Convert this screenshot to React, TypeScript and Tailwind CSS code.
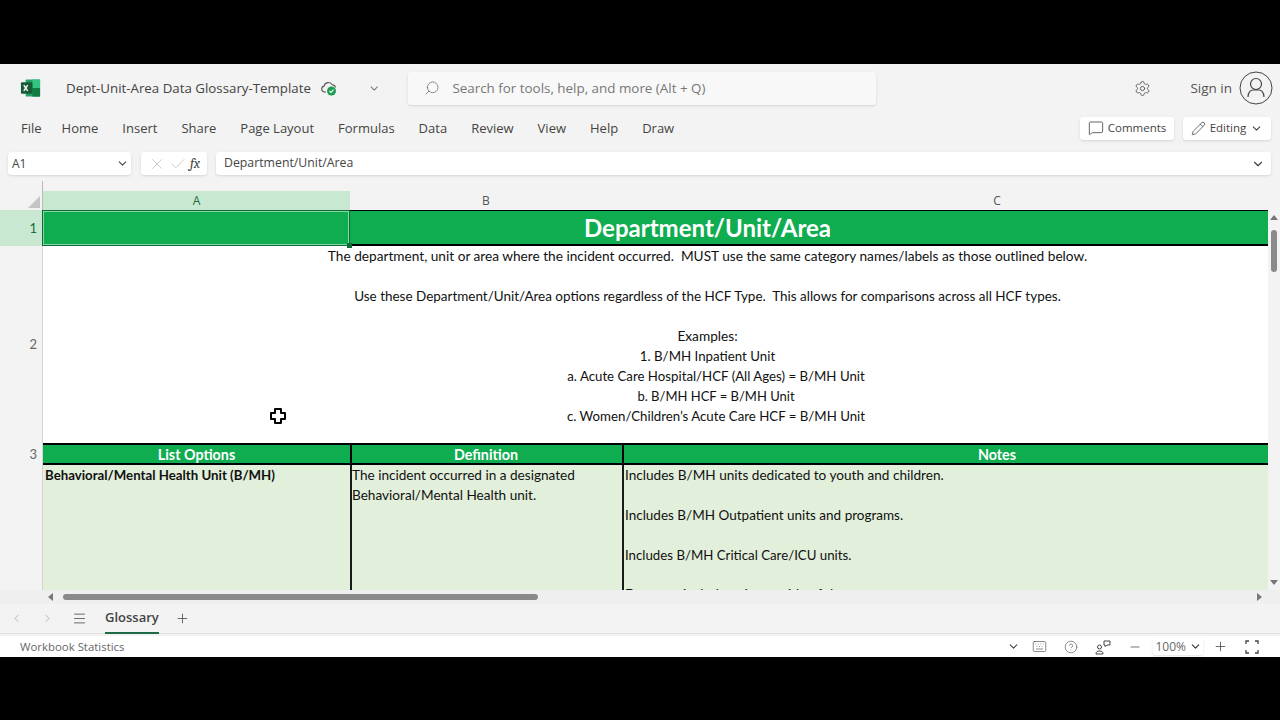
import React from 'react';
import { ChevronDown, ChevronLeft, ChevronRight, CircleHelp, Check, Keyboard, Menu, MessageSquare, Minus, Pencil, Plus, Search, Settings, X } from 'lucide-react';

const ribbonTabs = ['Home', 'Insert', 'Share', 'Page Layout', 'Formulas', 'Data', 'Review', 'View', 'Help', 'Draw'];

const ExcelLogo = () => (
  <svg width="22" height="20" viewBox="0 0 22 20">
    <rect x="6" y="1" width="15" height="18" rx="1" fill="#21a366" />
    <rect x="13" y="1" width="8" height="9" fill="#33c481" />
    <rect x="13" y="10" width="8" height="9" fill="#107c41" />
    <rect x="1" y="4" width="12" height="12" rx="1" fill="#185c37" />
    <path d="M4 7l4 6M8 7l-4 6" stroke="#fff" strokeWidth="1.5" fill="none" />
  </svg>
);

const CloudCheck = () => (
  <svg width="18" height="18" viewBox="0 0 18 18" fill="none">
    <path d="M6 13H4.500a3 3 0 0 1-.5-5.900 4.500 4.500 0 0 1 8.300-1.300 3.500 3.500 0 0 1 3.200 2.700" stroke="#555" strokeWidth="1.100" />
    <circle cx="11.500" cy="12" r="4.500" fill="#1f9d55" />
    <path d="M9.500 12l1.500 1.500 2.500-2.800" stroke="#fff" strokeWidth="1.100" />
  </svg>
);

const Avatar = () => (
  <svg width="34" height="34" viewBox="0 0 34 34" fill="none" stroke="#444" strokeWidth="1.200">
    <circle cx="17" cy="17" r="16" strokeWidth="1" />
    <circle cx="17" cy="13" r="5.500" />
    <path d="M9 26c0-5 3-7 5-7h6c2 0 5 2 5 7" />
  </svg>
);

const CellCursor = () => (
  <svg className="absolute left-[269px] top-[216px] z-10" width="18" height="18" viewBox="0 0 18 18">
    <path d="M6 2h6v4h4v6h-4v4H6v-4H2V6h4z" fill="#fff" stroke="#000" strokeWidth="2" strokeLinejoin="round" />
  </svg>
);

const Corners = () => (
  <svg width="14" height="14" viewBox="0 0 14 14" fill="none" stroke="#444" strokeWidth="1.300">
    <path d="M1 4V1h3M10 1h3v3M13 10v3h-3M4 13H1v-3" />
  </svg>
);

const Feedback = () => (
  <svg width="16" height="16" viewBox="0 0 16 16" fill="none" stroke="#444" strokeWidth="1">
    <circle cx="4.500" cy="8" r="2" />
    <path d="M1 15c0-2 1-3 3.500-3S8 13 8 15zM9 2h6v4h-3l-2 1.500V6H9z" />
  </svg>
);

const RowHead = ({ n, className, active }: { n: string; className: string; active?: boolean }) => (
  <div className={`flex items-center justify-end border-r border-[#d4d4d4] pr-[5px] text-[13px] ${active ? 'bg-[#c9e8d2] text-[#1c6b3c]' : 'text-[#666]'} ${className}`}>{n}</div>
);

export default function App() {
  return (
    <div className="h-[720px] w-[1280px] overflow-hidden bg-black" style={{ fontFamily: '"Open Sans", sans-serif' }}>
      <div className="mt-[64px] flex h-[593px] flex-col bg-[#f3f3f3] text-[#444]">
        {/* title bar */}
        <div className="flex h-[48px] items-center pl-[20px] pr-[7px]">
          <ExcelLogo />
          <span className="ml-[25px] pt-[1px] text-[13.3px] whitespace-nowrap">Dept-Unit-Area Data Glossary-Template</span>
          <span className="ml-[9px]"><CloudCheck /></span>
          <ChevronDown size={13} className="ml-[30px] text-[#777]" />
          <div className="ml-[28px] flex h-[33px] w-[468px] shrink-0 items-center rounded-[3px] bg-[#f8f8f8] pl-[16px] shadow-sm">
            <Search size={16} className="-scale-x-100 text-[#777]" strokeWidth={1.250} />
            <span className="ml-[12px] text-[13.4px] text-[#777]">Search for tools, help, and more (Alt + Q)</span>
          </div>
          <Settings size={17} strokeWidth={1.250} className="ml-[258px] shrink-0 text-[#555]" />
          <span className="ml-[39px] text-[13.5px] whitespace-nowrap text-[#555]">Sign in</span>
          <span className="ml-[7px]"><Avatar /></span>
        </div>

        {/* ribbon tabs */}
        <div className="flex h-[32px] items-center pl-[21px] pr-[9px]">
          <span className="mr-[20px] pt-[1px] text-[13px]">File</span>
          <nav className="flex gap-[24px] pt-[1px] text-[13px]">
            {ribbonTabs.map((tab) => <span key={tab}>{tab}</span>)}
          </nav>
          <div className="ml-auto flex gap-[9px] text-[11.5px]">
            <div className="flex h-[23px] w-[94px] items-center justify-center gap-[4px] rounded-[3px] bg-white shadow-sm">
              <MessageSquare size={16} strokeWidth={1.250} />Comments
            </div>
            <div className="flex h-[23px] w-[88px] items-center justify-center gap-[4px] rounded-[3px] bg-white shadow-sm">
              <Pencil size={15} strokeWidth={1.250} />Editing<ChevronDown size={13} />
            </div>
          </div>
        </div>

        {/* formula bar */}
        <div className="mt-[8px] flex h-[23px] items-center pl-[8px] pr-[9px]">
          <div className="flex h-full w-[123px] items-center justify-between rounded-[3px] bg-white pl-[4px] pr-[2px] text-[12px] shadow-sm">
            A1<ChevronDown size={13} />
          </div>
          <div className="ml-[10px] flex h-full w-[66px] items-center justify-center gap-[3px] rounded-[3px] bg-white shadow-sm">
            <X size={18} strokeWidth={1} className="text-[#bbb]" />
            <Check size={18} strokeWidth={1} className="text-[#bbb]" />
            <span className="font-serif text-[14px] italic text-[#444]">fx</span>
          </div>
          <div className="ml-[9px] flex h-full flex-1 items-center justify-between rounded-[3px] bg-white pl-[8px] pr-[6px] text-[12.300px] shadow-sm">
            Department/Unit/Area<ChevronDown size={14} />
          </div>
        </div>

        {/* sheet */}
        <div className="relative mt-[16px] flex min-h-0 flex-1">
          <CellCursor />
          <div className="absolute top-[-10px] left-[42px] h-[10px] w-[1px] bg-[#bbb]" />
          <div className="h-[399px] flex-1 overflow-hidden">
            <div className="grid w-[1372px] grid-cols-[43px_307px_272px_750px] grid-rows-[19px_36px_197px_22px_125px] text-[#111]" style={{ fontFamily: 'Lato, sans-serif' }}>
              {/* column headers */}
              <div className="relative border-r border-[#bbb]">
                <div className="absolute right-[2px] bottom-[2px] h-0 w-0 border-b-[12px] border-l-[12px] border-b-[#c4c4c4] border-l-transparent" />
              </div>
              <div className="flex items-center justify-center bg-[#c9e8d2] text-[12px] text-[#1c6b3c]" style={{ fontFamily: '"Open Sans", sans-serif' }}>A</div>
              <div className="flex items-center justify-center text-[12px] text-[#555]" style={{ fontFamily: '"Open Sans", sans-serif' }}>B</div>
              <div className="flex items-center justify-center text-[12px] text-[#555]" style={{ fontFamily: '"Open Sans", sans-serif' }}>C</div>

              {/* row 1 */}
              <RowHead n="1" active className="pt-[2px]" />
              <div className="relative col-span-3 flex items-center justify-center border-t border-b-2 border-t-black border-b-black bg-[#0fac50] text-[24px] leading-none font-bold text-white">
                <div className="absolute top-[-1px] bottom-[-2px] left-[-1px] w-[308px] border border-[#0c6a34] shadow-[inset_0_0_0_1px_#86d9a6]">
                  <div className="absolute right-[-3px] bottom-[-3px] h-[5px] w-[5px] bg-[#0c6a34]" />
                </div>
                Department/Unit/Area
              </div>

              {/* row 2 */}
              <RowHead n="2" className="" />
              <div className="col-span-3 bg-white text-center text-[13.670px] leading-[20px]">
                <p>The department, unit or area where the incident occurred.&nbsp; MUST use the same category names/labels as those outlined below.</p>
                <p className="mt-[20px] text-[13.470px]">Use these Department/Unit/Area options regardless of the HCF Type.&nbsp; This allows for comparisons across all HCF types.</p>
                <p className="mt-[20px]">Examples:</p>
                <p className="text-[13.300px]">1. B/MH Inpatient Unit</p>
                <p className="pl-[17px] text-[13.250px]">a. Acute Care Hospital/HCF (All Ages) = B/MH Unit</p>
                <p className="pl-[17px] text-[13px]">b. B/MH HCF = B/MH Unit</p>
                <p className="pl-[17px] text-[13.250px]">c. Women/Children’s Acute Care HCF = B/MH Unit</p>
              </div>

              {/* row 3 */}
              <RowHead n="3" className="pt-[1px]" />
              <div className="flex items-center justify-center border-y-2 border-black bg-[#0fac50] pt-[1px] text-[14.300px] font-bold text-white">List Options</div>
              <div className="flex items-center justify-center border-y-2 border-l-2 border-black bg-[#0fac50] pt-[1px] pr-[2px] text-[14.300px] font-bold text-white">Definition</div>
              <div className="flex items-center justify-center border-y-2 border-l-2 border-black bg-[#0fac50] pt-[1px] pr-[2px] text-[14.300px] font-bold text-white">Notes</div>

              {/* row 4 */}
              <div className="border-r border-[#d4d4d4]" />
              <div className="bg-[#e2efda] pl-[2px] text-[13.250px] leading-[20px] font-bold">Behavioral/Mental Health Unit (B/MH)</div>
              <div className="border-l-2 border-[#1a1a1a] bg-[#e2efda] text-[13.600px] leading-[20px]">
                The incident occurred in a designated<br />Behavioral/Mental Health unit.
              </div>
              <div className="overflow-hidden border-l-2 border-[#1a1a1a] bg-[#e2efda] pl-[1px] text-[13.600px] leading-[20px]">
                <p>Includes B/MH units dedicated to youth and children.</p>
                <p className="mt-[20px] text-[13.500px]">Includes B/MH Outpatient units and programs.</p>
                <p className="mt-[20px] text-[13.250px]">Includes B/MH Critical Care/ICU units.</p>
                <p className="mt-[19px]">Does not include units outside of the</p>
              </div>
            </div>
          </div>

          {/* vertical scrollbar */}
          <div className="flex h-[380px] w-[12px] flex-col items-center self-end bg-[#f3f3f3]">
            <div className="mt-[5px] h-0 w-0 border-x-[4px] border-b-[5px] border-x-transparent border-b-[#777]" />
            <div className="mt-[10px] h-[42px] w-[6px] rounded-full bg-[#8a8a8a]" />
            <div className="mt-auto mb-[5px] h-0 w-0 border-x-[4px] border-t-[5px] border-x-transparent border-t-[#777]" />
          </div>
        </div>

        {/* horizontal scrollbar */}
        <div className="flex h-[14px] items-center bg-[#efefef] pl-[48px] pr-[18px]">
          <div className="h-0 w-0 border-y-[4px] border-r-[5px] border-y-transparent border-r-[#777]" />
          <div className="ml-[10px] h-[6px] w-[475px] rounded-full bg-[#8a8a8a]" />
          <div className="ml-auto h-0 w-0 border-y-[4px] border-l-[5px] border-y-transparent border-l-[#777]" />
        </div>

        {/* sheet tabs */}
        <div className="flex h-[30px] items-center border-b border-[#e2e2e2] pl-[10px]">
          <ChevronLeft size={13} className="text-[#d0d0d0]" />
          <ChevronRight size={13} className="ml-[18px] text-[#d0d0d0]" />
          <Menu size={15} strokeWidth={1.250} className="ml-[18px] text-[#444]" />
          <span className="ml-[18px] flex h-[30px] items-center border-b-2 border-[#1d6b45] text-[13px] font-semibold">Glossary</span>
          <Plus size={15} strokeWidth={1.250} className="ml-[16px]" />
        </div>

        {/* status bar */}
        <div className="mt-[2px] flex h-[21px] items-center bg-white pl-[20px] pr-[21px] text-[#666]">
          <span className="pt-[1px] text-[11.400px]">Workbook Statistics</span>
          <ChevronDown size={13} className="ml-auto text-[#444]" />
          <Keyboard size={15} strokeWidth={1} className="ml-[12px] text-[#444]" />
          <CircleHelp size={14} strokeWidth={1} className="ml-[17px] text-[#444]" />
          <span className="ml-[17px]"><Feedback /></span>
          <Minus size={14} strokeWidth={1.250} className="ml-[17px] text-[#444]" />
          <div className="ml-[11px] flex h-[17px] w-[50px] items-center justify-end gap-[3px] rounded-[2px] bg-white pr-[1px] text-[12px] shadow-sm">
            100%<ChevronDown size={13} className="text-[#333]" />
          </div>
          <Plus size={15} strokeWidth={1.250} className="ml-[10px] text-[#444]" />
          <span className="ml-[17px]"><Corners /></span>
        </div>
      </div>
    </div>
  );
}
